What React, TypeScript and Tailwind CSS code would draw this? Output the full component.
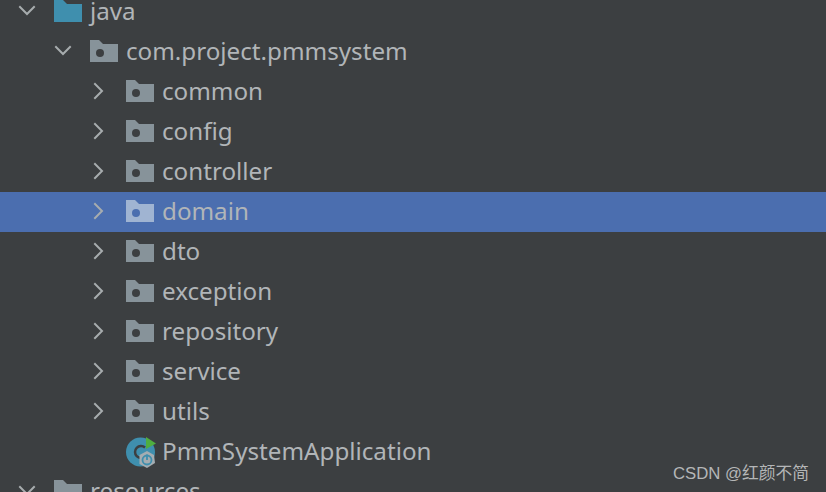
const rowFont = "font-['Segoe_UI','Noto_Sans','Open_Sans',sans-serif]";

function Chevron({ open, className }: { open: boolean; className: string }) {
  return (
    <svg width="18" height="18" viewBox="0 0 18 18" fill="none" className={className}>
      <path
        d={open ? "M2 5 L9 12 L16 5" : "M5 2 L12 9 L5 16"}
        stroke="#a7acae"
        strokeWidth="2"
        strokeLinecap="square"
      />
    </svg>
  );
}

function Folder({ color = "#87939a", dot = "#3c3f41", hasDot = true }: { color?: string; dot?: string; hasDot?: boolean }) {
  return (
    <svg width="28" height="22" viewBox="0 0 28 22">
      <path d="M0 0 H9 L13 4 H28 V22 H0 Z" fill={color} />
      {hasDot && <circle cx="10" cy="13" r="4" fill={dot} />}
    </svg>
  );
}

function AppIcon() {
  return (
    <svg width="34" height="34" viewBox="0 0 34 34">
      <circle cx="14.5" cy="18" r="14.5" fill="#3f8fae" />
      <path d="M19 13.5 A6 6 0 1 0 19 22.5" fill="none" stroke="#3c3f41" strokeWidth="2.5" />
      <path d="M20 3 L30 9.5 L20 15 Z" fill="#4fae3f" />
      <path d="M21 17 L28 21 L29 29 L21 34 L13.5 30 L13.5 21 Z" fill="#a4adb2" />
      <circle cx="21" cy="26" r="4.5" fill="none" stroke="#3f8fae" strokeWidth="1.8" />
      <path d="M21 20.5 V26" stroke="#3f8fae" strokeWidth="1.8" />
    </svg>
  );
}

const packages = ["common", "config", "controller", "domain", "dto", "exception", "repository", "service", "utils"];

export default function App() {
  return (
    <div className={`relative h-[492px] w-[826px] overflow-hidden bg-[#3c3f41] text-[24.2px] text-[#b1b5b8] ${rowFont}`}>
      <div className="-mt-2 flex flex-col">
        <div className="flex h-10 items-center pb-[2px] pl-[18px]">
          <Chevron open className="mr-[18px]" />
          <Folder color="#3f8fae" hasDot={false} />
          <span className="ml-2">java</span>
        </div>
        <div className="flex h-10 items-center pb-[2px] pl-[54px]">
          <Chevron open className="mr-[18px]" />
          <Folder />
          <span className="ml-2">com.project.pmmsystem</span>
        </div>
        {packages.map((name) => (
          <div key={name} className={`flex h-10 items-center pb-[2px] pl-[90px] ${name === "domain" ? "bg-[#4b6eaf]" : ""}`}>
            <Chevron open={false} className="mr-[18px]" />
            {name === "domain" ? <Folder color="#a0b4d2" dot="#4b6eaf" /> : <Folder />}
            <span className="ml-2">{name}</span>
          </div>
        ))}
        <div className="flex h-10 items-center pb-[2px] pl-[126px]">
          <AppIcon />
          <span className="ml-[2px]">PmmSystemApplication</span>
        </div>
        <div className="flex h-10 items-center pb-[2px] pl-[18px]">
          <Chevron open className="mr-[18px]" />
          <Folder hasDot={false} />
          <span className="ml-2">resources</span>
        </div>
      </div>
      <div className="absolute right-[17px] top-[464px] font-['Liberation_Sans','Noto_Sans_CJK_SC',sans-serif] text-[16.75px] leading-5 text-[#b4b6b7]">
        CSDN @红颜不简
      </div>
    </div>
  );
}
